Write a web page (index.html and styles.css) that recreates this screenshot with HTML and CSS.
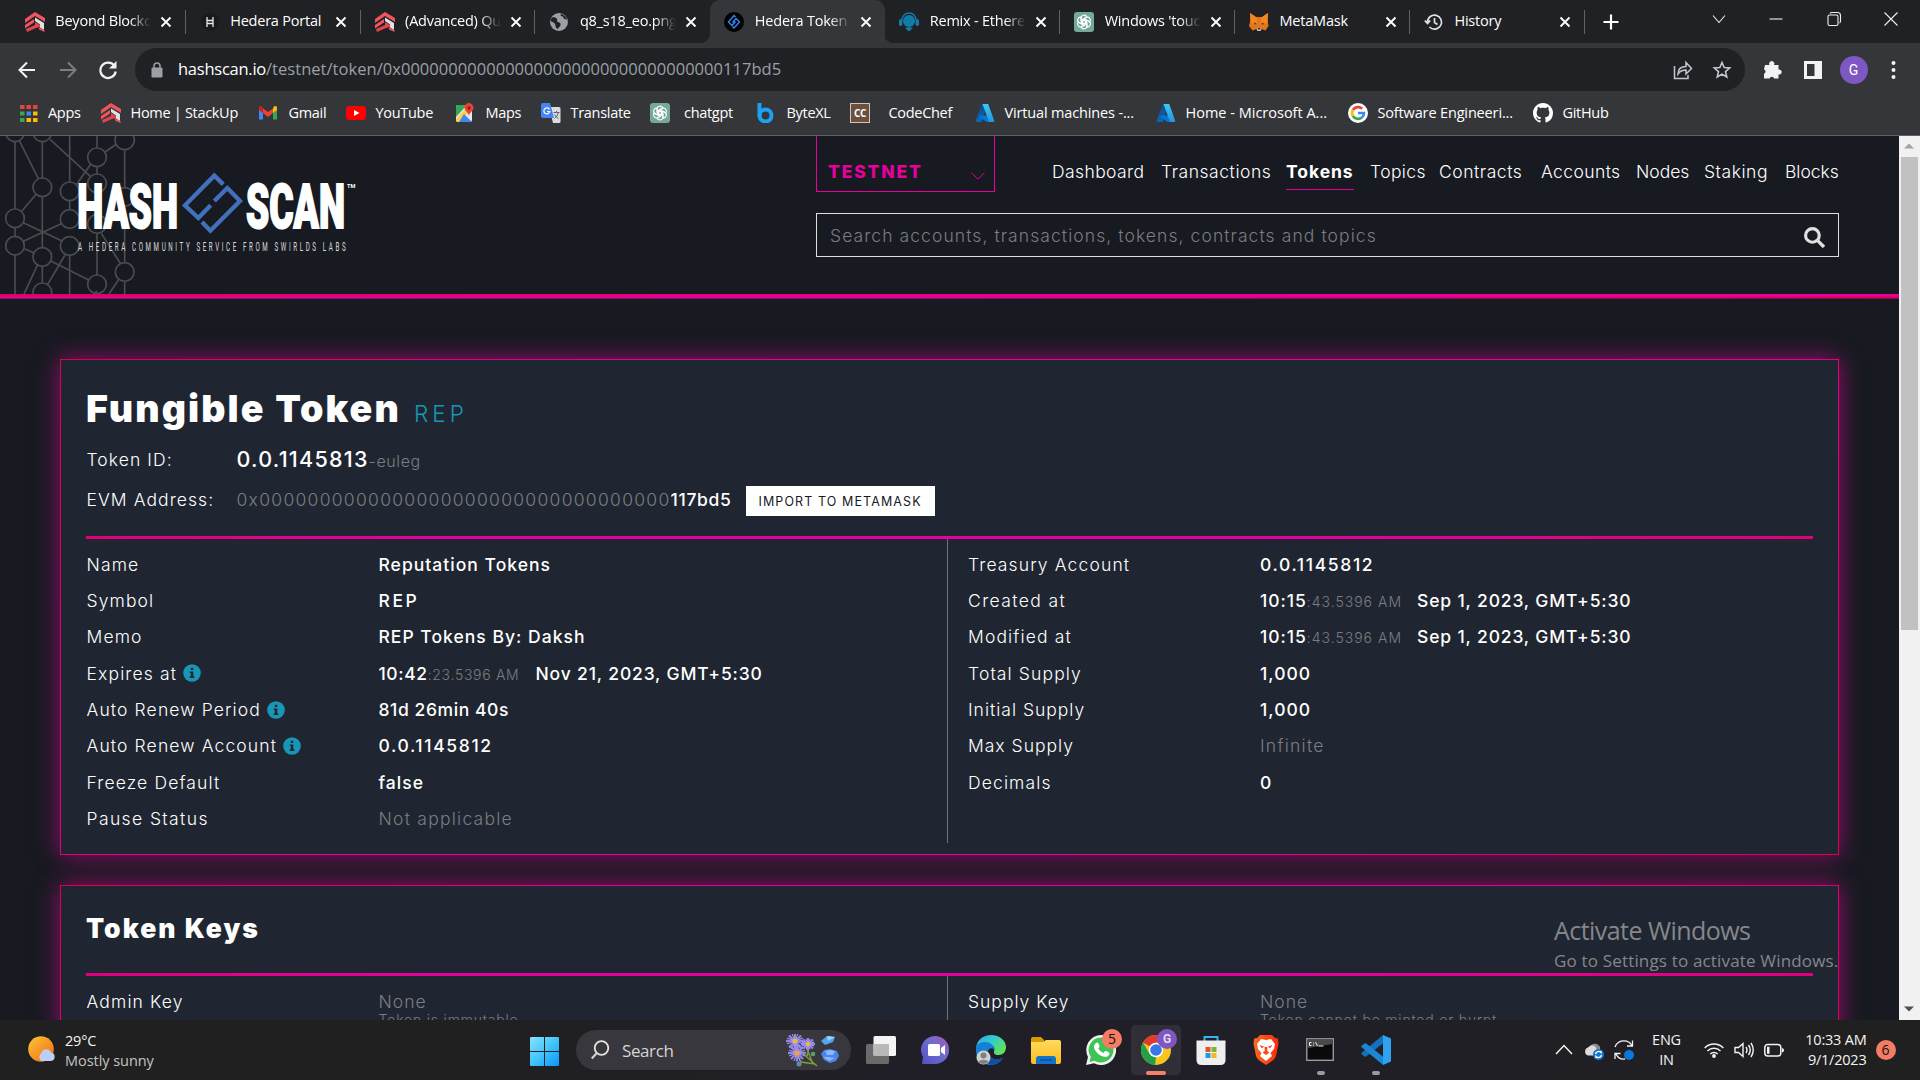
FILE: index.html
```html
<!DOCTYPE html>
<html lang="en">
<head>
<meta charset="utf-8">
<title>Hedera Token | HashScan</title>
<link rel="stylesheet" href="styles.css">
</head>
<body>
<svg class="defs" width="0" height="0">
  <defs>
    <linearGradient id="gAz1" x1="0" y1="0" x2="0" y2="1"><stop offset="0" stop-color="#114a8b"/><stop offset="1" stop-color="#0669bc"/></linearGradient>
    <linearGradient id="gAz2" x1="0" y1="0" x2="0" y2="1"><stop offset="0" stop-color="#3ccbf4"/><stop offset="1" stop-color="#2892df"/></linearGradient>
    <linearGradient id="gWin" x1="0" y1="0" x2="1" y2="1"><stop offset="0" stop-color="#8be0ff"/><stop offset=".5" stop-color="#41c6fb"/><stop offset="1" stop-color="#0a94fb"/></linearGradient>
    <linearGradient id="gSun" x1="0" y1="0" x2="1" y2="1"><stop offset="0" stop-color="#fcc53a"/><stop offset="1" stop-color="#ef6c12"/></linearGradient>
    <linearGradient id="gTeams" x1="1" y1="0" x2="0" y2="1"><stop offset="0" stop-color="#a05cb0"/><stop offset=".45" stop-color="#6f6cd0"/><stop offset="1" stop-color="#4f52c4"/></linearGradient>
    <linearGradient id="gEdge" x1="0" y1="0" x2="1" y2=".6"><stop offset="0" stop-color="#2aa9e8"/><stop offset=".5" stop-color="#35c9cf"/><stop offset="1" stop-color="#5fe35a"/></linearGradient>
    <linearGradient id="gFold" x1="0" y1="0" x2="0" y2="1"><stop offset="0" stop-color="#ffdb5c"/><stop offset="1" stop-color="#fbbc1e"/></linearGradient>
    <linearGradient id="gBrave" x1="0" y1="0" x2="1" y2="0"><stop offset="0" stop-color="#fb6a1c"/><stop offset="1" stop-color="#fb2a0c"/></linearGradient>
    <symbol id="stackup" viewBox="0 0 20 20"><path d="M0 7 10 0l10 6v4l-10-6L0 11z" fill="#f0545c"/><path d="m0 13 9-6v3.600l-9 6z" fill="#f0545c"/><path d="m10 5.500 9 5.500v7l-4-2.500v-3L10 9z" fill="#dfe1e5"/><path d="m10 10 5 3v2l-4 1-9 4-1-3 9-4z" fill="#e0454f"/><path d="M14 15.500 19.500 18v2L14 17.500z" fill="#f0545c"/></symbol>
    <symbol id="openai" viewBox="0 0 20 20"><rect width="20" height="20" rx="3" fill="#75a99c"/><g fill="none" stroke="#fff" stroke-width="1.100"><path d="M7 9V6.200C7 2.800 11.500 2 13 5l-4.500 2.600v4.500"/><path d="M7 9V6.200C7 2.800 11.500 2 13 5l-4.500 2.600v4.500" transform="rotate(60 10 10)"/><path d="M7 9V6.200C7 2.800 11.500 2 13 5l-4.500 2.600v4.500" transform="rotate(120 10 10)"/><path d="M7 9V6.200C7 2.800 11.500 2 13 5l-4.500 2.600v4.500" transform="rotate(180 10 10)"/><path d="M7 9V6.200C7 2.800 11.500 2 13 5l-4.500 2.600v4.500" transform="rotate(240 10 10)"/><path d="M7 9V6.200C7 2.800 11.500 2 13 5l-4.500 2.600v4.500" transform="rotate(300 10 10)"/></g></symbol>
    <symbol id="azure" viewBox="0 0 20 20"><path d="M7 1h5.500L6.500 19H1.500C.8 19 .5 18.400.7 17.800z" fill="url(#gAz1)"/><path d="M5 12.500h8l3 6.500-5-.2L4.500 14z" fill="#0078d4"/><path d="M7.500 1h5.700l6 16.800c.2.700-.2 1.200-.9 1.200h-5.500c.8 0 1-.5.8-1.200z" fill="url(#gAz2)"/></symbol>
    <symbol id="x" viewBox="0 0 12 12"><path d="m1.500 1.500 9 9m0-9-9 9" stroke="#fff" stroke-width="1.900" fill="none"/></symbol>
    <symbol id="info" viewBox="0 0 18 18"><circle cx="9" cy="9" r="8.800" fill="#1896b6"/><path d="M7.800 3.700h2.500v2.400H7.800zM6.800 7.400h3.500v4.800h1v1.700H6.800v-1.700h1V9.100h-1z" fill="#202631"/></symbol>
  </defs>
</svg>

<div class="screen">
  <div class="tabstrip">
    <div class="tab"><svg class="fav"><use href="#stackup"/></svg><span class="tab-title">Beyond Blockchain</span><svg class="close"><use href="#x"/></svg></div>
    <div class="tab"><svg class="fav" viewBox="0 0 20 20"><circle cx="10" cy="10" r="9" fill="#191a1c"/><path d="M7 5v10M13 5v10M7 8.500h6M7 11.500h6" stroke="#e8e8e8" stroke-width="1.300"/></svg><span class="tab-title fits">Hedera Portal</span><svg class="close"><use href="#x"/></svg></div>
    <div class="tab"><svg class="fav"><use href="#stackup"/></svg><span class="tab-title">(Advanced) Quest</span><svg class="close"><use href="#x"/></svg></div>
    <div class="tab no-sep"><svg class="fav" viewBox="0 0 20 20"><circle cx="10" cy="10" r="9" fill="#9aa0a6"/><path d="M3 5.500c3-.5 4 0 5 1.500s-1 2 1 3 3 1 2.500 3-2 2-2.500 4c-3-1-2-3-3-5s-4-2-4.500-3.500S2 7 3 5.500M12 2c-1 1.500 0 2.500 1.500 2.500S14 7 16 7s2 1 2.500 3c.2-3.500-2.500-7-6.500-8" fill="#202124"/></svg><span class="tab-title">q8_s18_eo.png (</span><svg class="close"><use href="#x"/></svg></div>
    <div class="tab active"><svg class="fav" viewBox="0 0 20 20"><circle cx="10" cy="10" r="10" fill="#000"/><path d="M11.500 5 10 3.500 4.500 10 8 13.500 11.500 9.500M8.500 10.500 12 6.500l3.500 3.500-5.500 6-1.500-1.500" fill="none" stroke="#2d84eb" stroke-width="1.500"/></svg><span class="tab-title">Hedera Token |</span><svg class="close"><use href="#x"/></svg></div>
    <div class="tab"><svg class="fav" viewBox="0 0 20 20"><path d="M3 8a7 7 0 0 1 14 0" fill="none" stroke="#127ba8" stroke-width="1.500"/><circle cx="10" cy="9" r="6" fill="#127ba8"/><rect y="7" width="3.500" height="7" rx="1.700" fill="#127ba8"/><rect x="16.500" y="7" width="3.500" height="7" rx="1.700" fill="#127ba8"/><path d="m6 16 4 3.500 4-3.500-4-1z" fill="#127ba8"/></svg><span class="tab-title">Remix - Ethereum</span><svg class="close"><use href="#x"/></svg></div>
    <div class="tab"><svg class="fav"><use href="#openai"/></svg><span class="tab-title">Windows 'touch'</span><svg class="close"><use href="#x"/></svg></div>
    <div class="tab"><svg class="fav" viewBox="0 0 20 20"><path d="m1 1 6 4h6l6-4-.5 7 1 6-3 4.500-4-1.500-1 2h-3l-1-2-4 1.500L0 14l1.500-6z" fill="#e2761b"/><path d="m1 1 6.500 4.500L8.500 12l-7-1zM19 1l-6.500 4.500L11.500 12l7-1z" fill="#f6851b"/><path d="M7.500 16h5l-1 3h-3z" fill="#d5bfb2"/><path d="M5.500 10.500 8 12l-2.500.5zM14.500 10.500 12 12l2.500.5zM8.500 16h3l-.5 1.500H9z" fill="#233447"/></svg><span class="tab-title fits">MetaMask</span><svg class="close"><use href="#x"/></svg></div>
    <div class="tab"><svg class="fav" viewBox="0 0 20 20"><path d="M3.500 10a7 7 0 1 1 2 5M.8 8.500l2.700 3 2.800-3M10.500 6v4.500l3 2" fill="none" stroke="#dfe1e5" stroke-width="1.700"/></svg><span class="tab-title fits">History</span><svg class="close"><use href="#x"/></svg></div>
    <svg class="plus" viewBox="0 0 16 16"><path d="M8 .5v15M.5 8h15" stroke="#fff" stroke-width="2.200"/></svg>
    <div class="win-buttons">
      <svg viewBox="0 0 16 16"><path d="m2 4.500 6 7 6-7" /></svg>
      <svg viewBox="0 0 16 16"><path d="M1.500 8h13"/></svg>
      <svg viewBox="0 0 16 16"><path d="M4 2.500q.5-1 2-1h5.500q3 0 3 3V10q0 1.500-1 2M3.500 4h7q1.500 0 1.500 1.500v7.500q0 1.500-1.500 1.500h-7Q2 14.500 2 13V5.500Q2 4 3.500 4z"/></svg>
      <svg viewBox="0 0 16 16"><path d="m1.500 1.500 13 13m0-13-13 13"/></svg>
    </div>
  </div>

  <div class="toolbar">
    <div class="nav-row">
      <svg class="nb" viewBox="0 0 20 20"><path d="M18 10H3m7-7.500L2.500 10l7.500 7.500" fill="none" stroke="#f1f3f4" stroke-width="2"/></svg>
      <svg class="nb" viewBox="0 0 20 20"><path d="M2 10h15m-7-7.500 7.500 7.500-7.500 7.500" fill="none" stroke="#7c7e82" stroke-width="2"/></svg>
      <svg class="nb" viewBox="0 0 20 20"><path d="M16.500 6A7.700 7.700 0 1 0 17.700 11.500" fill="none" stroke="#f1f3f4" stroke-width="2.200"/><path d="M18.500 1v7.500H11z" fill="#f1f3f4"/></svg>
      <div class="omnibox">
        <svg class="lock" viewBox="0 0 12 16"><rect x=".5" y="5.500" width="11" height="10" rx="1.300" fill="#9aa0a6"/><path d="M3 6V4a3 3 0 0 1 6 0v2" fill="none" stroke="#9aa0a6" stroke-width="1.500"/></svg>
        <span class="url"><b class="host">hashscan.io</b>/testnet/token/0x0000000000000000000000000000000000117bd5</span>
        <svg class="ob" viewBox="0 0 20 20"><path d="M1.500 6v12.500H15V15M5 14c0-5 3-7.500 8-7.500V2.500L18.500 8.500 13 14v-4c-4 0-6 1-8 4z" fill="none" stroke="#c4c7cb" stroke-width="1.500"/></svg>
        <svg class="ob" viewBox="0 0 20 20"><path d="m10 2.500 2.200 5 5.500.5-4.200 3.600 1.300 5.400-4.800-2.900L5.200 17l1.300-5.400L2.300 8l5.500-.5z" fill="none" stroke="#c4c7cb" stroke-width="1.600"/></svg>
      </div>
      <div class="ext">
        <svg viewBox="0 0 20 20"><path d="M2 5h4.500a2.600 2.600 0 1 1 4.500 0h4.500v4.500a2.500 2.500 0 1 1 0 4.800v4.200h-4.300a2.500 2.500 0 0 0-4.700 0H1v-4.700a2.500 2.500 0 0 0 0-4.600z" fill="#f1f3f4"/></svg>
        <svg viewBox="0 0 20 20"><path d="M1 1h18v18H1zM4 4v12h7.500V4z" fill="#f1f3f4" fill-rule="evenodd"/></svg>
        <span class="avatar">G</span>
        <svg viewBox="0 0 20 20"><g fill="#f1f3f4"><circle cx="8.500" cy="3" r="2"/><circle cx="8.500" cy="10" r="2"/><circle cx="8.500" cy="17" r="2"/></g></svg>
      </div>
    </div>
    <div class="bookmarks">
      <span class="bm"><svg viewBox="0 0 20 20"><path d="M0 2h4.500v4H0zM6.500 2H11v4H6.500zM13 2h4.500v4H13z" fill="#ea4335"/><path d="M0 8.500h4.500v4H0z" fill="#34a853"/><path d="M6.500 8.500H11v4H6.500z" fill="#4285f4"/><path d="M13 8.500h4.500v4H13zM13 15h4.500v4H13zM6.500 15H11v4H6.500z" fill="#fbbc04"/><path d="M0 15h4.500v4H0z" fill="#34a853"/></svg>Apps</span>
      <span class="bm"><svg><use href="#stackup"/></svg>Home | StackUp</span>
      <span class="bm"><svg viewBox="0 0 20 20"><path d="M0 5v11.500h4V10z" fill="#4285f4"/><path d="M18 5v11.500h-4V10z" fill="#34a853"/><path d="M14 5.500V10l4-3V4.500C18 3 16 2.500 14.800 3.500z" fill="#fbbc04"/><path d="M4 10V5.500L9 9l5-3.500V10l-5 4z" fill="#ea4335"/><path d="M0 4.500V7l4 3V5.500L3.200 3.500C2 2.500 0 3 0 4.500z" fill="#c5221f"/></svg>Gmail</span>
      <span class="bm"><svg viewBox="0 0 20 20"><rect y="3" width="20" height="14" rx="3.500" fill="#f00"/><path d="m8 7 5.500 3L8 13z" fill="#fff"/></svg>YouTube</span>
      <span class="bm"><svg viewBox="0 0 20 20"><rect y="2" width="16" height="17" rx="2" fill="#e8eaed"/><path d="M0 4q0-2 2-2h9L0 14z" fill="#34a853"/><path d="m0 16 11-12 3 4L3 19H2q-2 0-2-2z" fill="#fbd14b"/><path d="m8 11 8 8H3z" fill="#4285f4"/><path d="M12.500 0a5 5 0 0 1 5 5c0 3-4 4-4.500 8-.5-4-4.500-5-4.500-8a4.500 4.500 0 0 1 4-5" fill="#ea4335"/><circle cx="13" cy="5" r="1.700" fill="#8c1d18"/></svg>Maps</span>
      <span class="bm"><svg viewBox="0 0 20 20"><path d="M8 4h10q1.500 0 1.500 1.500v13q0 1.500-1.500 1.500h-6z" fill="#dadce0"/><path d="M2 0h7l4 15H2q-2 0-2-2V2q0-2 2-2z" fill="#4285f4"/><path d="M8.500 6.500a3 3 0 1 0 .3 2H6" fill="none" stroke="#fff" stroke-width="1.200"/><path d="M12.500 9.500h6M15.500 8v1.500m2 0q-1 4-4 6m0-4q2 3 4 4" fill="none" stroke="#5f6368"/></svg>Translate</span>
      <span class="bm wide-gap"><svg><use href="#openai"/></svg>chatgpt</span>
      <span class="bm"><svg viewBox="0 0 20 20"><path d="M2.500 0v13" stroke="#1da1f2" stroke-width="4"/><circle cx="8.500" cy="12.500" r="6" fill="none" stroke="#1da1f2" stroke-width="4"/></svg>ByteXL</span>
      <span class="bm wider-gap"><svg viewBox="0 0 20 20"><rect width="20" height="20" fill="#d6c6b8"/><rect x="1" y="1" width="18" height="18" fill="#6b4f3f"/><text x="10" y="13.500" text-anchor="middle" class="cc">CC</text></svg>CodeChef</span>
      <span class="bm loose"><svg><use href="#azure"/></svg>Virtual machines -...</span>
      <span class="bm looser"><svg><use href="#azure"/></svg>Home - Microsoft A...</span>
      <span class="bm loose"><svg viewBox="0 0 20 20"><circle cx="10" cy="10" r="10" fill="#fff"/><g fill="none" stroke-width="2.600"><path d="M14.200 5.800A6 6 0 0 0 4.900 7" stroke="#ea4335"/><path d="M4.900 7a6 6 0 0 0 0 6" stroke="#fbbc05"/><path d="M4.900 13a6 6 0 0 0 9 1.500" stroke="#34a853"/><path d="M13.900 14.500A6 6 0 0 0 16 10h-6" stroke="#4285f4"/></g></svg>Software Engineeri...</span>
      <span class="bm"><svg viewBox="0 0 16 16"><path fill="#fff" d="M8 0C3.580 0 0 3.580 0 8c0 3.540 2.290 6.530 5.470 7.590.4.070.55-.17.55-.38 0-.19-.010-.82-.010-1.490-2.010.37-2.530-.49-2.690-.94-.09-.23-.48-.94-.82-1.130-.28-.15-.68-.52-.010-.53.63-.010 1.080.58 1.230.82.72 1.210 1.870.87 2.330.66.070-.52.28-.87.51-1.070-1.780-.2-3.640-.89-3.640-3.950 0-.87.31-1.590.82-2.150-.08-.2-.36-1.020.08-2.120 0 0 .67-.21 2.200.82.64-.18 1.320-.27 2-.27s1.360.09 2 .27c1.530-1.040 2.200-.82 2.200-.82.44 1.100.16 1.920.08 2.120.51.56.82 1.270.82 2.150 0 3.070-1.870 3.750-3.650 3.950.29.25.54.73.54 1.480 0 1.070-.010 1.930-.010 2.200 0 .21.15.46.55.38A8.010 8.010 0 0 0 16 8c0-4.420-3.580-8-8-8z"/></svg>GitHub</span>
    </div>
  </div>

  <div class="viewport">
    <main class="page">
      <header class="header">
        <svg class="brand" viewBox="0 18 1440 474">
          <g fill="none" stroke="#4b4c50" stroke-width="5">
            <path d="M45 36v200M45 294v24M45 376v116M127 36v108M127 200v152M127 410v50M209 18v136M209 212v27M209 376v116M291 18v34M291 110v22M291 312v122M374 58v114M374 230v168M374 455v37"/>
            <path d="m58 32 57 114M150 28l122 112M107 194 65 244M350 42l-35 24M272 103l-42 60M70 278l118 56M184 281 70 334M73 356l28 12M154 394l112 56M195 375l-52 88M112 406l-40 86M304 310l58 92M355 450l-28 42M285 490l6-8"/>
            <circle cx="45" cy="8" r="27"/><circle cx="127" cy="8" r="27"/><circle cx="374" cy="30" r="29"/><circle cx="291" cy="82" r="28"/><circle cx="291" cy="160" r="28"/><circle cx="127" cy="172" r="28"/><circle cx="209" cy="184" r="28"/><circle cx="374" cy="201" r="28"/><circle cx="45" cy="265" r="28"/><circle cx="209" cy="267" r="28"/><circle cx="291" cy="282" r="28"/><circle cx="45" cy="347" r="28"/><circle cx="209" cy="348" r="28"/><circle cx="127" cy="381" r="28"/><circle cx="374" cy="426" r="28"/><circle cx="291" cy="463" r="28"/><circle cx="127" cy="487" r="28"/>
          </g>
          <text class="logo" x="232" y="294" textLength="302" lengthAdjust="spacingAndGlyphs">HASH</text>
          <text class="logo" x="738" y="294" textLength="297" lengthAdjust="spacingAndGlyphs">SCAN</text>
          <text class="tm" x="1041" y="174" textLength="25" lengthAdjust="spacingAndGlyphs">TM</text>
          <text class="tagline" transform="translate(234 363) scale(.52 1)" textLength="1544" lengthAdjust="spacing">A HEDERA COMMUNITY SERVICE FROM SWIRLDS LABS</text>
          <path d="m670 163-27-26-88 89 40 38 37-38M643 213l39-39 38 39-89 89-25-26" fill="none" stroke="#4270bd" stroke-width="13"/>
        </svg>
        <div class="head-right">
          <div class="head-top">
            <div class="network">TESTNET<svg viewBox="0 0 14 8"><path d="m.5.700 6.500 6.500L13.500.7" fill="none" stroke="#e6009e"/></svg></div>
            <nav class="menu"><a>Dashboard</a><a class="open">Transactions</a><a class="on">Tokens</a><a>Topics</a><a class="open">Contracts</a><a>Accounts</a><a class="snug">Nodes</a><a class="open">Staking</a><a class="snug">Blocks</a></nav>
          </div>
          <div class="search"><span>Search accounts, transactions, tokens, contracts and topics</span><svg viewBox="0 0 20 20"><circle cx="8" cy="8" r="6.500" fill="none" stroke="#e0e0e0" stroke-width="3"/><path d="m12.500 12.500 6.500 6.500" stroke="#e0e0e0" stroke-width="3.200"/></svg></div>
        </div>
      </header>
      <div class="stripe"></div>

      <section class="card first">
        <div class="title"><h1>Fungible Token</h1><span class="sym">REP</span></div>
        <div class="idrow"><span class="idlabel">Token ID:</span><span class="idvalue">0.0.1145813</span><span class="checksum">-euleg</span></div>
        <div class="idrow"><span class="idlabel">EVM Address:</span><span class="zeros">0x0000000000000000000000000000000000</span><span class="hex">117bd5</span><button class="import">IMPORT TO METAMASK</button></div>
        <div class="rule"></div>
        <div class="cols">
          <dl class="col">
            <dt>Name</dt><dd>Reputation Tokens</dd>
            <dt>Symbol</dt><dd class="caps">REP</dd>
            <dt>Memo</dt><dd>REP Tokens By: Daksh</dd>
            <dt>Expires at<svg><use href="#info"/></svg></dt><dd><span class="time">10:42<small>:23.5396 AM</small></span><span class="date">Nov 21, 2023, GMT+5:30</span></dd>
            <dt>Auto Renew Period<svg><use href="#info"/></svg></dt><dd class="tight">81d 26min 40s</dd>
            <dt>Auto Renew Account<svg><use href="#info"/></svg></dt><dd class="num">0.0.1145812</dd>
            <dt>Freeze Default</dt><dd>false</dd>
            <dt class="airy">Pause Status</dt><dd class="muted">Not applicable</dd>
          </dl>
          <dl class="col right">
            <dt>Treasury Account</dt><dd class="num">0.0.1145812</dd>
            <dt class="airy">Created at</dt><dd><span class="time">10:15<small>:43.5396 AM</small></span><span class="date">Sep 1, 2023, GMT+5:30</span></dd>
            <dt>Modified at</dt><dd><span class="time">10:15<small>:43.5396 AM</small></span><span class="date">Sep 1, 2023, GMT+5:30</span></dd>
            <dt>Total Supply</dt><dd>1,000</dd>
            <dt class="close-set">Initial Supply</dt><dd>1,000</dd>
            <dt class="close-set">Max Supply</dt><dd class="muted">Infinite</dd>
            <dt>Decimals</dt><dd>0</dd>
          </dl>
        </div>
      </section>

      <section class="card second">
        <h2>Token Keys</h2>
        <div class="rule"></div>
        <div class="cols">
          <dl class="col">
            <dt>Admin Key</dt><dd class="muted none">None</dd>
            <dt></dt><dd class="note">Token is immutable</dd>
          </dl>
          <dl class="col right">
            <dt class="close-set">Supply Key</dt><dd class="muted none">None</dd>
            <dt></dt><dd class="note">Token cannot be minted or burnt</dd>
          </dl>
        </div>
      </section>
    </main>
    <div class="scrollbar">
      <svg viewBox="0 0 20 20"><path d="m5 12 5-5 5 5z" fill="#a3a3a3"/></svg>
      <div class="thumb"></div>
      <svg class="down" viewBox="0 0 20 20"><path d="m5 8 5 5 5-5z" fill="#505050"/></svg>
    </div>
    <div class="watermark"><div class="wm1">Activate Windows</div><div class="wm2">Go to Settings to activate Windows.</div></div>
  </div>

  <footer class="taskbar">
    <div class="weather">
      <svg viewBox="0 0 28 28"><circle cx="13" cy="13" r="12.800" fill="url(#gSun)"/><path d="M14 25a4.500 4.500 0 0 1-.5-8 5 5 0 0 1 9.500-.5 4.300 4.300 0 0 1 0 8.500z" fill="#bcd0f5"/></svg>
      <div class="wtext"><div>29°C</div><div class="dim">Mostly sunny</div></div>
    </div>
    <svg class="start" viewBox="0 0 29 29"><path d="M0 1q0-1 1-1h13v14H0zM15 0h13q1 0 1 1v13H15zM0 15h14v14H1q-1 0-1-1zM15 15h14v13q0 1-1 1H15z" fill="url(#gWin)"/></svg>
    <div class="tsearch">
      <svg class="mag" viewBox="0 0 20 20"><circle cx="11.500" cy="8" r="6.800" fill="none" stroke="#e4e4e4" stroke-width="1.800"/><path d="m6.800 13-5 5.500" stroke="#cfcfcf" stroke-width="2.200"/></svg>
      <span class="stext">Search</span>
      <svg class="flowers" viewBox="0 0 56 34">
        <path d="m14 16 18 16M20 10l8 20M12 20l4 8 14 2M24 14l-2 8" fill="none" stroke="#7d9b3c" stroke-width="1.500"/>
        <g stroke="#8f84ee" stroke-width="2.300"><path d="M1 7h18M4 1.500l12 12M10-1v16M16 1.500l-12 12M3 19h18M6 13l12 12M12 10.500v17M18 13 6 25M16 10h14M18 5.500l10 9M23 4v12M28 5.500l-10 9"/></g>
        <g stroke="#a99df6" stroke-width="1"><path d="m2 4 16 6M7-.5l6 15M13-.5l-6 15M18 4 2 10M4 16l16 6M9 11l6 16M15 11 9 27M20 16 4 22M17 8l12 4M21 5l4 10M25 5l-4 10M29 8l-12 4"/></g>
        <circle cx="10" cy="7" r="2.600" fill="#f3b63a"/><circle cx="12" cy="19" r="2.600" fill="#f3a23a"/><circle cx="23" cy="10" r="2.200" fill="#f3b63a"/>
        <circle cx="28" cy="20" r="2.300" fill="#5c9c6c"/><circle cx="14" cy="30" r="2.500" fill="#5c8ca8"/>
        <path d="m36 7 6-5 8 1-2 5-8 3z" fill="#4fa6f2"/><path d="m42 2 1 5 7-4z" fill="#9cd2fb"/>
        <path d="m36 20 3-4 6-1 7 2 2 5-3 5-6 2-6-3z" fill="#4d83ee"/><path d="m40 17 2 4h6l2-4-5-1zM38 23l6 4 6-3-6-1z" fill="#8ab8fa"/>
      </svg>
    </div>
    <div class="apps">
      <div class="app"><svg viewBox="0 0 30 30"><rect y="9" width="23" height="20" rx="1.500" fill="#6a6a6a"/><rect x="7.500" y="1" width="22.500" height="20" rx="1.500" fill="#f4f4f4"/><path d="M7.500 9H22q1 0 1 1v11H9q-1.500 0-1.500-1.500z" fill="#b9b9b9"/></svg></div>
      <div class="app"><svg viewBox="0 0 30 30"><path d="M15 1a14 14 0 1 1-2 28H1l1-7A14 14 0 0 1 15 1z" fill="url(#gTeams)"/><rect x="7" y="9" width="12" height="12" rx="1.500" fill="#fff"/><path d="m20 13 4-3v10l-4-3z" fill="#fff"/></svg></div>
      <div class="app"><svg viewBox="0 0 30 30"><path d="M0 13C1 5 7 0 15 0c9 0 15 6 15 12 0 5-3 8-7.500 8S18 18 18 16c1-2 .5-6-5-6C7 10 1 11 0 13z" fill="url(#gEdge)"/><path d="M0 13C1 9 5 7 9 7c5 0 9 3 9 7-3-2-6 0-6 3 0 6 7 9 15 6-3 5-8 7-12 7C5 30-1 22 0 13z" fill="#1580d4"/><path d="M12 17c0 6 7 9 15 6-3 5-8 7-12 7-6-2-6-10-3-13z" fill="#134f9c"/><circle cx="7.500" cy="22.500" r="7" fill="#cfcfcf"/><circle cx="7.500" cy="20.500" r="3" fill="#808080"/><path d="M2.500 27c1-3 9-3 10 0q-5 4-10 0z" fill="#808080"/></svg></div>
      <div class="app"><svg viewBox="0 0 30 30"><path d="M0 4q0-2 2-2h8l3 3v5H0z" fill="#d99a06"/><path d="M0 7h12l3-2h13q2 0 2 2v20q0 2-2 2H2q-2 0-2-2z" fill="url(#gFold)"/><path d="M5 29v-5q0-3 3-3h14q3 0 3 3v5z" fill="#1273c8"/><path d="M9 25h12" stroke="#0b4e94" stroke-width="1.300"/></svg></div>
      <div class="app"><svg viewBox="0 0 30 30"><path d="M15 0a15 15 0 1 1-7 28.200L0 30l2-8A15 15 0 0 1 15 0z" fill="#f2f2f2"/><path d="M15 2.500a12.500 12.500 0 1 1-6.500 23.200L3.500 27l1.300-5A12.500 12.500 0 0 1 15 2.500z" fill="#3cc555"/><path d="M9.500 8.500q2-2 3 0l1 2.500q.3 1-1.200 2.400 2 3.600 5 4.600l1.500-1.700q.7-.7 1.500-.2l2.700 1.400q1 .6 0 2.500-2 2.800-6 1.500-6-2-8.800-8-1-3.200 1.300-5z" fill="#fff"/></svg><span class="badge">5</span></div>
      <div class="app current"><svg viewBox="0 0 30 30"><circle cx="15" cy="15" r="15" fill="#f8c51c"/><path d="M15 15 2 7.500A15 15 0 0 1 28 7.500H15z" fill="#e0392f"/><path d="M2 7.500 8.500 18.800 15 22l-1 8A15 15 0 0 1 2 7.500z" fill="#22a04a"/><circle cx="15" cy="15" r="7.300" fill="#fff"/><circle cx="15" cy="15" r="5.800" fill="#3578e5"/></svg><span class="badge prof">G</span></div>
      <div class="app"><svg viewBox="0 0 30 30"><path d="M8.500 6V2h13v4" fill="none" stroke="#34b6ea" stroke-width="2"/><path d="M.5 5.500h29V25q0 5-5 5h-19q-5 0-5-5z" fill="#efefef"/><path d="M9.500 12h5v5h-5z" fill="#e8512c"/><path d="M15.500 12h5v5h-5z" fill="#7fb52a"/><path d="M9.500 18h5v5h-5z" fill="#1a9de8"/><path d="M15.500 18h5v5h-5z" fill="#f9b51e"/></svg></div>
      <div class="app"><svg viewBox="0 0 30 30"><path d="M9 0h12l3 3 3 .5.500 5L25 21q-1 3-4 5l-6 4-6-4q-3-2-4-5L2.500 8.500 3 3.500 6 3z" fill="url(#gBrave)"/><path d="m10 4 5 1 5-1 4 5-1 5-3.500 4 1.500 3-6 5-6-5 1.500-3L7 14 6 9z" fill="#fff"/><path d="m8.500 10 4.500 1.500-2 2zM21.500 10 17 11.500l2 2zM13.500 12h3l-.3 4 2.300 1.500L15 20l-3.500-2.500 2.300-1.500z" fill="#fb4a16"/></svg></div>
      <div class="app running"><svg viewBox="0 0 30 30"><rect x=".8" y="3.800" width="26.500" height="21.500" fill="#0a0a0a" stroke="#9a9a9a" stroke-width="1.400"/><path d="M1.500 4.500h25V9L2 13z" fill="#4a4a4a"/><path d="M5.500 7.500H3.500v3h2M7.500 7.700v.8M7.500 9.700v.8M9.500 7l2 4M12.500 11h5" fill="none" stroke="#fff" stroke-width=".9"/></svg></div>
      <div class="app running"><svg viewBox="0 0 30 30"><path d="m22 0 .5 8L4.500 22 1 19.800q-1.400-1.200 0-2.400z" fill="#1272bd"/><path d="m22 30 .5-8L4.500 8 1 10.200q-1.400 1.200 0 2.400z" fill="#1a86d4"/><path d="m22 0 8 3.500v23L22 30z" fill="#2fa3ef"/></svg></div>
    </div>
    <div class="tray">
      <svg viewBox="0 0 20 20"><path d="m2 14 8-8.500 8 8.500" fill="none" stroke="#f3f3f3" stroke-width="1.500"/></svg>
      <svg viewBox="0 0 20 20"><path d="M6 6a6 6 0 0 1 10 1v6H6z" fill="#8c8c8c"/><path d="M4 15.500a4.200 4.200 0 0 1 0-8 5 5 0 0 1 8 0l2 8z" fill="#dcdcdc"/><circle cx="14.500" cy="14.500" r="5.500" fill="#1576c8"/><path d="M11.500 14a3.200 3.200 0 0 1 5.500-1.500V11m.5 4a3.200 3.200 0 0 1-5.500 1.500V18" fill="none" stroke="#fff" stroke-width="1.300"/></svg>
      <svg viewBox="0 0 20 20"><path d="M1 7A9.500 9.500 0 0 1 18 5.500M18.500.5V6H13M11 19q-6 1-9-5M1 19v-5.500h5.500" fill="none" stroke="#f3f3f3" stroke-width="1.300"/><circle cx="15" cy="15" r="5" fill="#0a78d6"/></svg>
    </div>
    <div class="lang"><div>ENG</div><div>IN</div></div>
    <div class="status">
      <svg viewBox="0 0 20 20"><path d="M.7 8a13 13 0 0 1 18.600 0M3.500 11a9.200 9.200 0 0 1 13 0M6.300 14a5.300 5.300 0 0 1 7.400 0" fill="none" stroke="#f3f3f3" stroke-width="1.500"/><circle cx="10" cy="16" r="1.900" fill="#f3f3f3"/></svg>
      <svg viewBox="0 0 20 20"><path d="M1 7.500h3.500L9 3.500v13l-4.500-4H1zM12 7q2 3 0 6M14.500 5q3.500 5 0 10M17 3q4.500 7 0 14" fill="none" stroke="#f3f3f3" stroke-width="1.400"/></svg>
      <svg viewBox="0 0 20 20"><rect x=".8" y="4.500" width="16" height="11.500" rx="3" fill="none" stroke="#f3f3f3" stroke-width="1.500"/><path d="M3 6.800h2.500v7H3z" fill="#f3f3f3"/><path d="M18 8q2 .2 2 2.200T18 12.500z" fill="#f3f3f3"/></svg>
    </div>
    <div class="clock"><div>10:33 AM</div><div>9/1/2023</div></div>
    <span class="count">6</span>
  </footer>
</div>
</body>
</html>
```
FILE: styles.css
```css
* { box-sizing: border-box; }
body { margin: 0; background: #171a21; }
.defs { display: block; position: absolute; }
svg { display: block; flex: none; }

.screen {
  width: 1920px; height: 1080px; overflow: hidden;
  display: grid; grid-template-rows: 43px 93px 884px 60px;
  font-family: "Open Sans", "Noto Sans", sans-serif; font-size: 14.5px; letter-spacing: -.22px; color: #fff;
}

/* browser tabs */
.tabstrip { display: flex; align-items: stretch; background: #202124; padding-left: 10.8px; }
.tab { position: relative; width: 174.9px; display: flex; align-items: center; padding-left: 14px; border-right: 1px solid transparent; }
.tab::after { content: ""; position: absolute; right: -1px; top: 10px; height: 24px; width: 1px; background: #5f6165; }
.tab.no-sep::after, .tab.active::after { display: none; }
.tab.active { background: #35363a; border-radius: 10px 10px 0 0; }
.tab.active::before { content: ""; position: absolute; left: -10px; right: -10px; bottom: 0; height: 10px;
  background: radial-gradient(circle at 0 0, transparent 10px, #35363a 10.500px) left / 10px 10px no-repeat,
              radial-gradient(circle at 100% 0, transparent 10px, #35363a 10.500px) right / 10px 10px no-repeat; }
.fav { width: 20px; height: 20px; }
.tab-title { margin-left: 10.5px; width: 96px; margin-right: 9px; padding-bottom: 2px; white-space: nowrap; overflow: hidden; line-height: 24px;
  -webkit-mask-image: linear-gradient(90deg, #000 78%, transparent); mask-image: linear-gradient(90deg, #000 78%, transparent); }
.tab-title.fits { -webkit-mask-image: none; mask-image: none; }
.close { width: 12px; height: 12px; }
.plus { width: 16px; height: 16px; align-self: center; margin-left: 18px; }
.win-buttons { display: flex; gap: 41.5px; margin-left: 92px; padding-top: 10.5px; }
.win-buttons svg { width: 16px; height: 16px; fill: none; stroke: #f0f0f0; stroke-width: 1.1; }

/* address bar */
.toolbar { background: #35363a; border-bottom: 1px solid #5f6165; }
.nav-row { display: flex; align-items: center; height: 53px; padding-left: 17px; }
.nb { width: 20px; height: 20px; margin-right: 20.5px; }
.omnibox { display: flex; align-items: center; width: 1610px; height: 43px; border-radius: 22px; background: #202124; padding-left: 16px; margin-left: -3.500px; }
.lock { width: 12px; height: 16px; }
.url { margin-left: 15px; width: 1495px; font-size: 16.5px; letter-spacing: .04px; line-height: 22px; padding-bottom: 1px; color: #9aa0a6; white-space: nowrap; }
.host { font-weight: 400; color: #fff; letter-spacing: -.25px; }
.ob { width: 20px; height: 20px; margin-right: 19px; }
.ob:last-child { margin-right: 13px; }
.ext { display: flex; align-items: center; gap: 20px; margin-left: 17.5px; }
.ext svg { width: 20px; height: 20px; }
.avatar { width: 28px; height: 28px; margin: 0 -3px; border-radius: 50%; background: #7e57c2; text-align: center; font: 14px/28px Roboto, sans-serif; }

.bookmarks { display: grid; grid-template-columns: 81px 158px 87px 110px 85px 109px 107px 93px 125px 181px 192px 185px 90px; padding-left: 20px; height: 33px; align-items: center; }
.bm { display: flex; align-items: center; gap: 9.500px; white-space: nowrap; line-height: 20px; letter-spacing: -.3px; }
.bm svg { width: 20px; height: 20px; margin-top: 1px; }
.bm:first-child { gap: 8px; }
.bm.wide-gap { gap: 14px; }
.bm.wider-gap { gap: 18.500px; }
.bm.loose { letter-spacing: -.15px; }
.bm.looser { letter-spacing: 0; }
.cc { font: 700 10px "Open Sans", sans-serif; fill: #fff; }

/* page */
.viewport { position: relative; display: grid; grid-template-columns: 1899px 21px; overflow: hidden; }
.page { overflow: hidden; background: #171a21; font-family: Inter, "Noto Sans", sans-serif; font-size: 17.5px; font-weight: 300; letter-spacing: 1.08px; }
.header { display: flex; height: 158px; }
.brand { width: 480px; height: 158px; }
.logo { font: 900 183px Roboto, sans-serif; letter-spacing: 0; fill: #fff; stroke: #fff; stroke-width: 6; }
.tm { font: 700 17px Roboto, sans-serif; letter-spacing: 0; fill: #fff; }
.tagline { font: 400 36px Roboto, sans-serif; letter-spacing: 0; fill: #dcdcdc; }
.head-right { margin-left: 336px; width: 1023px; }
.head-top { display: flex; height: 77px; }
.network { display: flex; justify-content: space-between; align-items: flex-start; width: 179px; height: 56px; padding: 25px 9px 0 11px; border: 1px solid #e6009e; border-top: 0; color: #e6009e; font-weight: 800; letter-spacing: 1.85px; line-height: 22px; }
.network svg { width: 14px; height: 8px; margin-top: 11px; }
.menu { display: grid; grid-template-columns: 109px 125px 84px 69px 102px 95px 68px 81px 54px; margin-left: 57px; padding-top: 25px; line-height: 22px; letter-spacing: .4px; white-space: nowrap; }
.menu a { justify-self: start; }
.menu .open { letter-spacing: .55px; }
.menu .snug { letter-spacing: 0; }
.menu .on { font-weight: 700; letter-spacing: .95px; height: 29px; border-bottom: 1px solid #e6009e; }
.search { display: flex; justify-content: space-between; align-items: center; height: 44px; border: 1px solid #dedede; padding: 0 13px; color: #7c7d80; }
.search svg { width: 21px; height: 21px; margin-top: 4px; }
.stripe { height: 5px; background: linear-gradient(90deg, #e0005a, #e6009e 70%) top / 100% 50% no-repeat, linear-gradient(90deg, #e6009e 40%, #e0005a) bottom / 100% 51% no-repeat; }

.card { width: 1779px; margin-left: 60px; padding: 0 25px; background: #202631; border: 1px solid;
  border-image: linear-gradient(135deg, #dc0050, #e6009e 35%, #e6009e 65%, #dc0050) 1; box-shadow: 0 0 22px rgba(230, 0, 158, .62); }
.first { height: 496px; margin-top: 60px; }
.second { height: 240px; margin-top: 30px; }
.title { display: flex; align-items: baseline; height: 79px; line-height: 97px; }
h1, h2 { margin: 0; font-weight: 900; }
h1 { font-size: 37.5px; letter-spacing: 2.1px; width: 328px; white-space: nowrap; }
h2 { font-size: 26.5px; letter-spacing: 2px; line-height: 85px; height: 87px; }
.sym { font-size: 22.5px; letter-spacing: 4px; color: #1896b6; }
.idrow { display: flex; align-items: center; height: 40px; padding-left: .5px; }
.idlabel { width: 150px; }
.idvalue { font-size: 21.5px; font-weight: 500; letter-spacing: 1.25px; }
.checksum { font-size: 16px; letter-spacing: .6px; color: #7c7d80; padding-top: 3px; }
.zeros { letter-spacing: 1.290px; color: #7c7d80; }
.hex { font-weight: 500; letter-spacing: .67px; }
.import { width: 189px; height: 30px; margin: 3px 0 0 14px; padding: 0; border: 0; background: #fff; color: #171a21; font: 400 12.5px/31px Inter, sans-serif; letter-spacing: 1.1px; }
.rule { height: 3px; background: linear-gradient(90deg, #e0007a, #e6009e 20%, #e6009e 70%, #e0007a); }
.first .rule { margin-top: 17px; }
.cols { display: grid; grid-template-columns: 862px 866px; }
.col { display: grid; grid-template-columns: 292px 1fr; grid-auto-rows: 36.350px; align-content: start; align-items: center; margin: 0; padding: 7px 0 0 .5px; height: 304px; border-right: 1px solid #707277; white-space: nowrap; }
.col.right { padding-left: 20px; border: 0; }
dt { display: flex; align-items: center; letter-spacing: 1.13px; }
dt svg { width: 18px; height: 18px; margin-left: 6px; }
.airy { letter-spacing: 1.4px; }
.close-set { letter-spacing: 1px; }
dd { display: flex; align-items: baseline; margin: 0; font-weight: 500; letter-spacing: 1.02px; }
.tight { letter-spacing: .58px; }
.num { letter-spacing: 1.650px; }
.caps { letter-spacing: 2.6px; }
.time { width: 157px; letter-spacing: .6px; }
small { font-size: 14px; font-weight: 300; letter-spacing: .7px; color: #7c7d80; }
.right .time { letter-spacing: .95px; }
.right small { letter-spacing: 1px; }
.date { letter-spacing: .84px; }
.muted { font-weight: 300; letter-spacing: 1.25px; color: #7c7d80; }
.none { letter-spacing: 1px; }
.second .col { grid-template-rows: 27px 18px; padding-top: 12px; }
.note { margin-top: -8px; font-size: 14px; line-height: 18px; font-weight: 300; letter-spacing: .8px; color: #7c7d80; }

.scrollbar { background: #f1f1f1; }
.scrollbar svg { width: 20px; height: 21px; }
.thumb { width: 17px; height: 473px; margin-left: 2px; background: #c1c1c1; }
.down { margin-top: 368px; }
.watermark { position: absolute; left: 1554px; top: 777px; color: #85878b; white-space: nowrap; }
.wm1 { font-size: 25px; letter-spacing: -.55px; line-height: 34px; }
.wm2 { font-size: 17px; letter-spacing: .17px; line-height: 27px; }

/* taskbar */
.taskbar { display: flex; align-items: center; background: linear-gradient(90deg, #202020 20%, #201f28 50%, #201f26 75%, #202020); color: #f3f3f3; line-height: 20px; white-space: nowrap; }
.weather { display: flex; align-items: center; gap: 9px; width: 502px; padding-left: 28px; }
.weather svg { width: 28px; height: 28px; }
.wtext { padding-top: 1px; }
.dim { color: #c4c4c4; letter-spacing: -.05px; }
.start { width: 29px; height: 29px; margin: 2px 17px 0 28px; }
.tsearch { display: flex; align-items: center; width: 275px; height: 40px; border-radius: 20px; background: #38373d; padding-left: 14px; font-size: 17px; letter-spacing: -.4px; color: #d4d4d4; }
.stext { padding-top: 1px; }
.mag { width: 20px; height: 20px; margin-right: 12px; }
.flowers { width: 56px; height: 34px; margin-left: 112px; margin-top: 2px; }
.apps { display: grid; grid-template-columns: repeat(10, 55px); margin-left: 2.500px; }
.app { position: relative; width: 50px; height: 50px; margin: 0 2.500px; padding: 10px; border-radius: 5px; }
.app svg { width: 30px; height: 30px; }
.current { background: #302f37; }
.current::after, .running::after { content: ""; position: absolute; bottom: 0; left: 21px; width: 8px; height: 4px; border-radius: 2px; background: #9b9b9d; }
.current::after { left: 15px; width: 20px; background: #f6806a; }
.badge { position: absolute; left: 26px; top: 4px; width: 20px; height: 20px; border-radius: 50%; background: #f47c64; color: #111; text-align: center; font-size: 14px; }
.prof { background: #7e57c2; color: #e3d8f5; font: 700 12px/20px Roboto, sans-serif; }
.tray { display: flex; gap: 10px; margin-left: 150px; }
.tray svg, .status svg { width: 20px; height: 20px; }
.lang { width: 40px; margin-left: 13px; text-align: center; }
.status { display: flex; gap: 10px; margin-left: 17px; }
.clock { width: 83px; text-align: right; }
.count { width: 20px; height: 20px; margin-left: 9px; border-radius: 50%; background: #f47c64; color: #111; text-align: center; font-size: 14px; }
```
